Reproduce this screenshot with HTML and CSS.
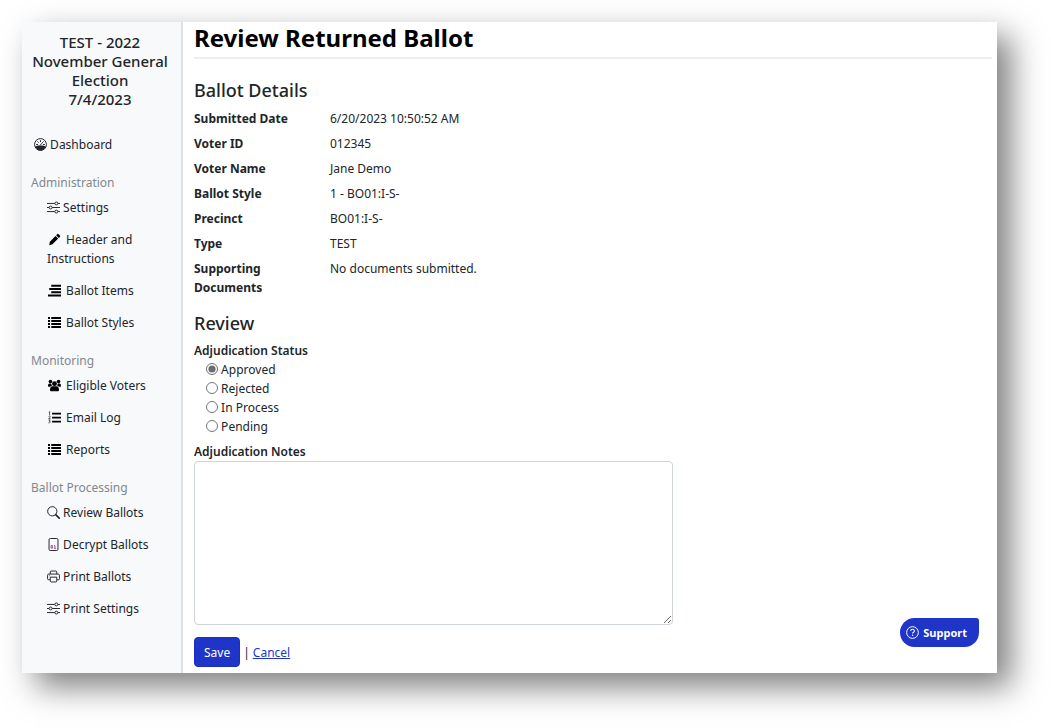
FILE: index.html
```html
<!DOCTYPE html>
<html lang="en">
<head>
    <meta charset="UTF-8">
    <meta name="viewport" content="width=device-width, initial-scale=1.0">
    <title>Review Returned Ballot</title>
    <link rel="stylesheet" href="styles.css">
</head>
<body>

<!-- shared icon shapes -->
<svg class="sprite" aria-hidden="true">
    <symbol id="i-gauge" viewBox="0 0 16 16">
        <circle cx="8" cy="8" r="7.3" fill="none" stroke="currentColor" stroke-width="1.2"/>
        <path d="M1.300 10.500C4 9.300 6 9.300 8 9.300s4 0 6.700 1.200C13.500 13.500 11 15.300 8 15.300S2.500 13.500 1.300 10.500z"/>
        <path d="M8 3v1.500M4.500 4.500l1 1M3 8h1.500M11.500 8H13M7.500 9l4-4.500" fill="none" stroke="currentColor" stroke-width="1.1" stroke-linecap="round"/>
    </symbol>
    <symbol id="i-sliders" viewBox="0 0 16 16">
        <path d="M0 3h9.500M13.500 3H16M0 8h2.500M6.500 8H16M0 13h9.500M13.500 13H16" fill="none" stroke="currentColor" stroke-width="1.2"/>
        <g fill="none" stroke="currentColor" stroke-width="1.2"><circle cx="11.5" cy="3" r="1.8"/><circle cx="4.5" cy="8" r="1.8"/><circle cx="11.5" cy="13" r="1.8"/></g>
    </symbol>
    <symbol id="i-pencil" viewBox="0 0 16 16">
        <path d="M11.3 1.500a1.300 1.300 0 0 1 1.800 0l1.500 1.500a1.300 1.300 0 0 1 0 1.800l-1.300 1.300-3.300-3.300zM9.200 3.600l3.300 3.300-7 7L1.500 15l.8-4.300z"/>
    </symbol>
    <symbol id="i-align" viewBox="0 0 16 16">
        <path d="M4 1h12v2.300H4zM1.500 5H16v2.300H1.500zM4 9h12v2.300H4zM0 13h16v2.300H0z"/>
    </symbol>
    <symbol id="i-list" viewBox="0 0 16 16">
        <path d="M0 1.300h2.500v2.400H0zM4 1.300h12v2.400H4zM0 5h2.500v2.400H0zM4 5h12v2.400H4zM0 8.700h2.500v2.400H0zM4 8.700h12v2.400H4zM0 12.400h2.500v2.400H0zM4 12.400h12v2.400H4z"/>
    </symbol>
    <symbol id="i-numbers" viewBox="0 0 16 16">
        <path d="M5 2h11v2.200H5zM5 7h11v2.200H5zM5 12h11v2.200H5z"/>
        <path d="M1 1.500l1-.7V5M.8 6.700c.5-.8 2-.6 2 .3 0 .8-1.300 1.300-2 2.500H3M.8 11h1.900l-1.200 1.500c2 0 1.800 2.500-.9 2" fill="none" stroke="currentColor" stroke-width=".8"/>
    </symbol>
    <symbol id="i-users" viewBox="0 0 16 16">
        <circle cx="8" cy="5.700" r="3"/><circle cx="3" cy="3.200" r="2.200"/><circle cx="13" cy="3.200" r="2.200"/>
        <path d="M3.500 15c-.8 0-1-.7-1-1.500C2.500 11 3.500 9 5.500 9h5c2 0 3 2 3 4.500 0 .8-.2 1.500-1 1.500zM0 8.500C0 6.800.6 5.500 1.800 5.500L4.300 5.700C4.200 7 4.600 7.600 5 8.300 3.800 8.400 3.200 9 2.700 9.500H.8C.3 9.500 0 9 0 8.500zM16 8.500c0-1.700-.6-3-1.800-3l-2.500.2c.1 1.300-.3 1.900-.7 2.600 1.200.1 1.800.7 2.300 1.200h1.900c.5 0 .8-.5.800-1z"/>
    </symbol>
    <symbol id="i-search" viewBox="0 0 16 16">
        <circle cx="6.500" cy="6.500" r="5.700" fill="none" stroke="currentColor" stroke-width="1.2"/>
        <path d="M10.700 10.700l4.300 4.300" fill="none" stroke="currentColor" stroke-width="2" stroke-linecap="round"/>
    </symbol>
    <symbol id="i-binary" viewBox="0 0 16 16">
        <rect x="2.500" y=".6" width="11" height="14.800" rx="1.600" fill="none" stroke="currentColor" stroke-width="1.2"/>
        <path d="M8.700 9.700l1-.7v3.700M8.500 12.700h2.700M5 9.300h1.700v3.200H5z" fill="none" stroke="#8a3a8a" stroke-width="1"/>
    </symbol>
    <symbol id="i-printer" viewBox="0 0 16 16">
        <path d="M4 5V2.500A1.200 1.200 0 0 1 5.200 1.300h5.600A1.200 1.200 0 0 1 12 2.500V5M3.500 12H2a1.300 1.300 0 0 1-1.300-1.300V6.500A1.500 1.500 0 0 1 2.200 5h11.600a1.500 1.500 0 0 1 1.500 1.500v4.200A1.300 1.300 0 0 1 14 12h-1.500M4 8.800h8v4.700a1.200 1.200 0 0 1-1.200 1.200H5.200A1.200 1.200 0 0 1 4 13.500z" fill="none" stroke="currentColor" stroke-width="1.2"/>
        <circle cx="3" cy="7" r=".6"/>
    </symbol>
    <symbol id="i-help" viewBox="0 0 16 16">
        <circle cx="8" cy="8" r="7.200" fill="none" stroke="currentColor" stroke-width="1.2"/>
        <path d="M5.800 6.200C5.800 3.300 10.300 3.400 10.300 6c0 1.600-2.200 1.700-2.200 3.300" fill="none" stroke="currentColor" stroke-width="1.3"/>
        <circle cx="8.100" cy="11.500" r=".9"/>
    </symbol>
</svg>

<div class="app">
    <nav class="sidebar">
        <h2 class="election">TEST - 2022 November General Election<br>7/4/2023</h2>

        <a class="dashboard" href="#"><svg class="icon"><use href="#i-gauge"/></svg> Dashboard</a>

        <h3 class="nav-title">Administration</h3>
        <ul class="nav-list">
            <li><a href="#"><svg class="icon"><use href="#i-sliders"/></svg> Settings</a></li>
            <li><a href="#"><svg class="icon solid"><use href="#i-pencil"/></svg> Header and Instructions</a></li>
            <li><a href="#"><svg class="icon solid"><use href="#i-align"/></svg> Ballot Items</a></li>
            <li><a href="#"><svg class="icon solid"><use href="#i-list"/></svg> Ballot Styles</a></li>
        </ul>

        <h3 class="nav-title">Monitoring</h3>
        <ul class="nav-list">
            <li><a href="#"><svg class="icon solid"><use href="#i-users"/></svg> Eligible Voters</a></li>
            <li><a href="#"><svg class="icon solid"><use href="#i-numbers"/></svg> Email Log</a></li>
            <li><a href="#"><svg class="icon solid"><use href="#i-list"/></svg> Reports</a></li>
        </ul>

        <h3 class="nav-title">Ballot Processing</h3>
        <ul class="nav-list">
            <li><a href="#"><svg class="icon"><use href="#i-search"/></svg> Review Ballots</a></li>
            <li><a href="#"><svg class="icon"><use href="#i-binary"/></svg> Decrypt Ballots</a></li>
            <li><a href="#"><svg class="icon"><use href="#i-printer"/></svg> Print Ballots</a></li>
            <li><a href="#"><svg class="icon"><use href="#i-sliders"/></svg> Print Settings</a></li>
        </ul>
    </nav>

    <main class="content">
        <h1>Review Returned Ballot</h1>

        <h2>Ballot Details</h2>
        <dl class="details">
            <dt>Submitted Date</dt>
            <dd>6/20/2023 10:50:52 AM</dd>
            <dt>Voter ID</dt>
            <dd>012345</dd>
            <dt>Voter Name</dt>
            <dd>Jane Demo</dd>
            <dt>Ballot Style</dt>
            <dd>1 - BO01:I-S-</dd>
            <dt>Precinct</dt>
            <dd>BO01:I-S-</dd>
            <dt>Type</dt>
            <dd>TEST</dd>
            <dt>Supporting Documents</dt>
            <dd>No documents submitted.</dd>
        </dl>

        <h2>Review</h2>
        <form>
            <fieldset class="status">
                <legend>Adjudication Status</legend>
                <label><input type="radio" name="status" checked> Approved</label>
                <label><input type="radio" name="status"> Rejected</label>
                <label><input type="radio" name="status"> In Process</label>
                <label><input type="radio" name="status"> Pending</label>
            </fieldset>

            <label class="notes-label" for="notes">Adjudication Notes</label>
            <textarea id="notes"></textarea>

            <div class="actions">
                <button type="button" class="save">Save</button>
                <span>|</span>
                <a href="#">Cancel</a>
            </div>
        </form>
    </main>

    <button type="button" class="support"><svg class="icon"><use href="#i-help"/></svg> Support</button>
</div>

</body>
</html>
```
FILE: styles.css
```css
* {
    box-sizing: border-box;
}
body {
    margin: 0;
    padding: 22px 54px 55px 22px;
    font-family: "Noto Sans", "Open Sans", sans-serif;
    font-size: 12px;
    line-height: 19px;
    color: #212529;
    background-color: #fff;
}
h1, h2, h3, ul, dl, dd {
    margin: 0;
    padding: 0;
}
.sprite {
    display: none;
}
.icon {
    width: 13px;
    height: 13px;
    fill: currentColor;
    vertical-align: -2px;
}
.icon.solid {
    margin: 0 2px 0 1px;
    color: #000;
}
.app {
    position: relative;
    display: flex;
    min-height: calc(100vh - 77px);
    background-color: #fff;
    box-shadow: 14px 14px 30px rgba(0, 0, 0, 0.5);
}

/* sidebar */
.sidebar {
    flex: 0 0 161px;
    padding: 11px 12px 11px 9px;
    background-color: #f8f9fb;
    border-right: 2px solid #dee2e6;
}
.sidebar a {
    color: #212529;
    text-decoration: none;
}
.election {
    font-size: 15px;
    font-weight: 500;
    text-align: center;
}
.dashboard {
    display: block;
    margin: 26px 0 19px;
    padding-left: 3px;
}
.nav-title {
    font-size: 12px;
    font-weight: 400;
    color: #808890;
}
.nav-list {
    list-style: none;
    margin-bottom: 12px;
}
.nav-list a {
    display: block;
    padding: 6px 0 7px 16px;
}

/* main column */
.content {
    flex: 1;
    padding: 0 5px 5px 11px;
}
h1 {
    padding-bottom: 3px;
    border-bottom: 2px solid #ededf2;
    font-size: 24px;
    line-height: 32px;
    color: #000;
}
.content h2 {
    font-size: 18px;
    font-weight: 500;
    line-height: 23px;
}
.content h1 + h2 {
    margin-top: 20px;
}
.details {
    display: grid;
    grid-template-columns: 100px 1fr;
    gap: 6px 36px;
    margin: 7px 0 15px;
}
.details dt {
    font-weight: 700;
}
.status {
    display: flex;
    flex-direction: column;
    margin: 6px 0 6px;
    padding: 0 0 0 12px;
    border: none;
}
.status legend {
    margin-left: -12px;
    padding: 0;
    font-weight: 600;
}
.status input {
    width: 12px;
    height: 12px;
    margin: 0;
    vertical-align: -1px;
    accent-color: #6c6c6c;
}
.notes-label {
    display: block;
    font-weight: 600;
}
textarea {
    display: block;
    width: 60%;
    height: 164px;
    border: 1px solid #ced4da;
    border-radius: 4px;
    font: inherit;
}
.actions {
    display: flex;
    align-items: center;
    gap: 3px;
    margin-top: 12px;
}
.actions a {
    color: #1f35c7;
}
.save {
    height: 30px;
    padding: 0 9px;
    border: 1px solid #1a2fc0;
    border-radius: 4px;
    background-color: #1f35c7;
    color: #fff;
    font: inherit;
}

/* floating help button */
.support {
    position: absolute;
    right: 18px;
    bottom: 26px;
    display: flex;
    align-items: center;
    gap: 4px;
    height: 29px;
    padding: 0 12px 0 6px;
    border: none;
    border-radius: 15px 3px 15px 15px;
    background-color: #1f35c7;
    color: #fff;
    font: inherit;
    font-size: 11px;
    font-weight: 700;
}
```
